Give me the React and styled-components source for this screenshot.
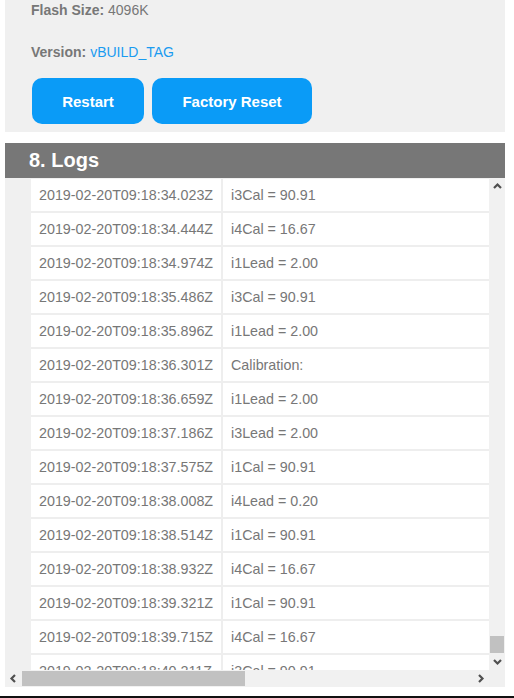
import React from 'react';
import styled, {createGlobalStyle} from 'styled-components';

const GlobalStyle = createGlobalStyle`
  body {
    margin: 0;
    background: #fff;
    font-family: "Liberation Sans", Arial, sans-serif;
    overflow: hidden;
  }
`;

const Page = styled.div`
  width: 500px;
  padding-left: 5px;
  height: 698px;
  display: flex;
  flex-direction: column;
`;

const Card = styled.div`
  background: #f0f0f0;
  padding: 0 26px 8px;
`;

const Info = styled.div`
  font-size: 14px;
  line-height: 20px;
  color: #777;
  margin-bottom: ${p => p.$gap || 0}px;
  & > b {
    font-weight: bold;
  }
`;

const Value = styled.span`
  color: ${p => (p.$link ? '#1a9bf0' : '#777')};
`;

const Buttons = styled.div`
  display: flex;
  gap: 8px;
  padding-left: 1px;
`;

const Button = styled.button`
  height: 46px;
  width: ${p => p.$w}px;
  border: none;
  border-radius: 10px;
  background: #0a9bf7;
  color: #fff;
  font-family: "Liberation Sans", Arial, sans-serif;
  font-weight: bold;
  font-size: 15px;
  cursor: pointer;
`;

const Header = styled.h2`
  margin: 11px 0 0;
  height: 35px;
  line-height: 35px;
  background: #777;
  color: #fff;
  font-size: 20px;
  font-weight: bold;
  padding-left: 24px;
`;

const LogBox = styled.div`
  display: grid;
  grid-template-columns: 484px 16px;
  grid-template-rows: 492px 17px;
  background: #f0f0f0;
`;

const Viewport = styled.div`
  overflow: hidden;
  padding: 1px 0 0 26px;
`;

const Table = styled.table`
  border-collapse: collapse;
  table-layout: fixed;
  width: 940px;
  background: #fff;
  font-size: 14.3px;
  color: #777;
`;

const Td = styled.td`
  height: 32px;
  padding: 0 8px;
  border-bottom: 2px solid #eee;
  white-space: nowrap;
  overflow: hidden;
  &:first-child {
    width: 174px;
    border-right: 2px solid #eee;
  }
`;

const VBar = styled.div`
  background: #f1f1f1;
  display: flex;
  flex-direction: column;
`;

const HBar = styled.div`
  background: #f1f1f1;
  display: flex;
`;

const Arrow = styled.div`
  flex: 0 0 ${p => p.$size}px;
  display: flex;
  align-items: center;
  justify-content: center;
  color: #505050;
`;

const Track = styled.div`
  flex: 1;
  display: flex;
  flex-direction: ${p => (p.$vertical ? 'column' : 'row')};
  justify-content: ${p => (p.$vertical ? 'flex-end' : 'flex-start')};
`;

const Thumb = styled.div`
  background: #c1c1c1;
  ${p => (p.$vertical ? 'height: 17px; margin: 0 1px;' : 'width: 223px; margin: 1px 0;')}
`;

const Corner = styled.div`
  background: #f0f0f0;
`;

const Footer = styled.div`
  margin-top: 9px;
  margin-left: -5px;
  width: 514px;
  height: 2px;
  background: #111;
`;

const Chevron = ({dir}) => {
    const pts = {
        up: '1,6 4.5,2.5 8,6',
        down: '1,3 4.5,6.5 8,3',
        left: '6,1 2.5,4.5 6,8',
        right: '3,1 6.5,4.5 3,8',
    };
    return (
        <svg width="9" height="9" viewBox="0 0 9 9">
            <polyline points={pts[dir]} fill="none" stroke="currentColor" strokeWidth="2.2"/>
        </svg>
    );
};

const logs = [
    ['34.023', 'i3Cal = 90.91'],
    ['34.444', 'i4Cal = 16.67'],
    ['34.974', 'i1Lead = 2.00'],
    ['35.486', 'i3Cal = 90.91'],
    ['35.896', 'i1Lead = 2.00'],
    ['36.301', 'Calibration:'],
    ['36.659', 'i1Lead = 2.00'],
    ['37.186', 'i3Lead = 2.00'],
    ['37.575', 'i1Cal = 90.91'],
    ['38.008', 'i4Lead = 0.20'],
    ['38.514', 'i1Cal = 90.91'],
    ['38.932', 'i4Cal = 16.67'],
    ['39.321', 'i1Cal = 90.91'],
    ['39.715', 'i4Cal = 16.67'],
    ['40.211', 'i3Cal = 90.91'],
];

function App() {
    return (
        <Page>
            <GlobalStyle/>
            <Card>
                <Info $gap={22}><b>Flash Size:</b> <Value>4096K</Value></Info>
                <Info $gap={16}><b>Version:</b> <Value $link>vBUILD_TAG</Value></Info>
                <Buttons>
                    <Button $w={112}>Restart</Button>
                    <Button $w={160}>Factory Reset</Button>
                </Buttons>
            </Card>
            <Header>8. Logs</Header>
            <LogBox>
                <Viewport>
                    <Table>
                        <tbody>
                            {logs.map(([t, msg]) => (
                                <tr key={t}>
                                    <Td>2019-02-20T09:18:{t}Z</Td>
                                    <Td>{msg}</Td>
                                </tr>
                            ))}
                        </tbody>
                    </Table>
                </Viewport>
                <VBar>
                    <Arrow $size={17}><Chevron dir="up"/></Arrow>
                    <Track $vertical><Thumb $vertical/></Track>
                    <Arrow $size={17}><Chevron dir="down"/></Arrow>
                </VBar>
                <HBar>
                    <Arrow $size={17}><Chevron dir="left"/></Arrow>
                    <Track><Thumb/></Track>
                    <Arrow $size={17}><Chevron dir="right"/></Arrow>
                </HBar>
                <Corner/>
            </LogBox>
            <Footer/>
        </Page>
    );
}

export default App;
